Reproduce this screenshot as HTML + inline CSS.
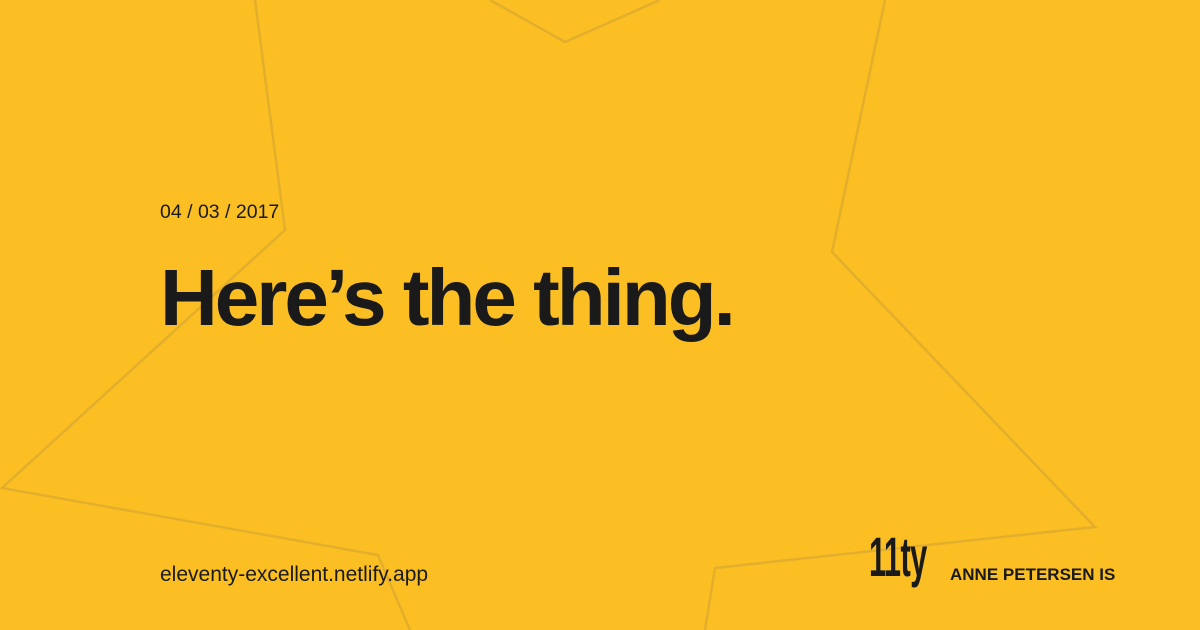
<!DOCTYPE html>
<html><head><style>
html,body{margin:0;padding:0}
body{width:1200px;height:630px;background:#fbbf24;position:relative;overflow:hidden;font-family:"Liberation Sans",sans-serif;color:#1a1a1a}
svg.bg{position:absolute;left:0;top:0}
.t{position:absolute;white-space:nowrap}
</style></head><body>
<svg class="bg" width="1200" height="630"><g fill="none" stroke="#e2ae2c" stroke-width="2.5">
<polyline points="255,0 285,230 2,488 378,555 410,630"/>
<polyline points="490,0 565,42 660,0"/>
<polyline points="885,0 832,252 1095,527 715,568 705,630"/>
</g></svg>
<div class="t" style="left:160px;top:201px;font-size:19.5px">04 / 03 / 2017</div>
<div class="t" style="left:160px;top:252px;font-size:80px;font-weight:bold;letter-spacing:-3px">Here’s the thing.</div>
<div class="t" style="left:160px;top:563px;font-size:21px">eleventy-excellent.netlify.app</div>
<div class="t" style="left:869px;top:524px;font-size:56px;font-weight:bold;letter-spacing:-1px;transform:scaleX(0.55);transform-origin:left top">11ty</div>
<div class="t" style="left:950px;top:565px;font-size:17px;font-weight:bold">ANNE PETERSEN IS</div>
</body></html>
